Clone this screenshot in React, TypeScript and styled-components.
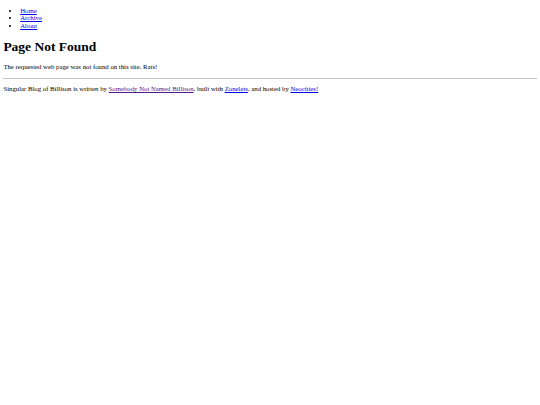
import styled, { createGlobalStyle } from 'styled-components';

// The reference is a 1280px-wide default-styled page shrunk to 540px,
// so every size here is the browser default times 540 / 1280.
const GlobalStyle = createGlobalStyle`
  html, body {
    margin: 0;
    background: #ffffff;
  }
  body {
    font-family: "Liberation Serif", "Times New Roman", serif;
    color: #000000;
  }
`;

const Page = styled.div`
  padding: 6.75px 3.375px;
  font-size: 6.75px;
  line-height: 7.6px;
`;

const NavList = styled.ul`
  margin: 0;
  padding-left: 16.875px;
  list-style: disc;
`;

const NavItem = styled.li`
  line-height: 7.6px;
`;

const Link = styled.a<{ $visited?: boolean }>`
  color: ${({ $visited }) => ($visited ? '#551a8b' : '#0000ee')};
  text-decoration: underline;
  text-decoration-thickness: 0.5px;
  text-underline-offset: 0.8px;
  cursor: pointer;
`;

const Title = styled.h1`
  margin: 9.05px 0;
  font-size: 13.5px;
  line-height: 15.6px;
  font-weight: bold;
`;

const Text = styled.p`
  margin: 0;
  line-height: 7.6px;
`;

const Rule = styled.hr`
  margin: 6.75px 0;
  border: none;
  border-top: 1px solid #c4c4c4;
  height: 0;
`;

const nav = ['Home', 'Archive', 'About'];

const App: React.FC = () => {
  return (
    <>
      <GlobalStyle />
      <Page>
        <NavList>
          {nav.map((item) => (
            <NavItem key={item}>
              <Link href="#">{item}</Link>
            </NavItem>
          ))}
        </NavList>
        <Title>Page Not Found</Title>
        <Text>The requested web page was not found on this site. Rats!</Text>
        <Rule />
        <Text>
          Singular Blog of Billison is written by{' '}
          <Link href="#" $visited>
            Somebody Not Named Billison
          </Link>
          , built with <Link href="#">Zonelets</Link>, and hosted by{' '}
          <Link href="#">Neocities!</Link>
        </Text>
      </Page>
    </>
  );
};

export default App;
